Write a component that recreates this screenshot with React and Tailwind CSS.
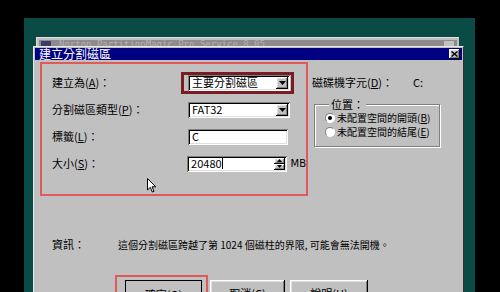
import React from "react";

const sunken =
  "shadow-[inset_1px_1px_0_#808080,inset_-1px_-1px_0_#ffffff,inset_2px_2px_0_#000000,inset_-2px_-2px_0_#dfdfdf]";
const raised =
  "shadow-[inset_-1px_-1px_0_#000000,inset_1px_1px_0_#ffffff,inset_-2px_-2px_0_#808080,inset_2px_2px_0_#dfdfdf]";

function DownBtn() {
  return (
    <div className={`w-[12px] h-[12px] bg-[#c0c0c0] ${raised} flex items-center justify-center`}>
      <svg width="7" height="4" viewBox="0 0 7 4">
        <path d="M0 0H7L3.5 4Z" fill="#000" />
      </svg>
    </div>
  );
}

function Combo({ text }) {
  return (
    <div className={`w-[102px] h-[16px] bg-white ${sunken} flex items-center pl-[4px] pr-[2px]`}>
      <span className="flex-1 text-[11px] leading-none">{text}</span>
      <DownBtn />
    </div>
  );
}

function Row({ label, children }) {
  return (
    <div className="h-[27px] flex items-center pl-[10px]">
      <div className="w-[136px] text-[11px] leading-none whitespace-nowrap">{label}</div>
      {children}
    </div>
  );
}

function U({ c }) {
  return <span className="underline">{c}</span>;
}

export default function App() {
  return (
    <div className="w-[500px] h-[292px] bg-black relative overflow-hidden font-['Noto_Sans_CJK_TC',sans-serif] text-black">
      <div className="absolute left-[24px] top-[18px] w-[451px] h-[274px] bg-[#0b4b46]" />
      {/* back window */}
      <div className="absolute left-[36px] top-[37px] w-[423px] h-[30px] bg-[#c0c0c0] border-t border-l border-[#e0e0e0] p-[2px]">
        <div className="h-[9px] bg-[#8c8c8c] flex items-center pl-[2px] pr-[3px] overflow-hidden">
          <div className="w-[10px] h-[7px] bg-[#3c3c6c] mr-[8px]" />
          <span className="flex-1 text-[9px] leading-none text-[#b0b0b0] font-['DejaVu_Sans_Mono',monospace] whitespace-nowrap">
            Norton PartitionMagic Pro Service 8.05
          </span>
          <div className="w-[10px] h-[7px] bg-[#c0c0c0]" />
        </div>
      </div>
      {/* front dialog */}
      <div className="absolute left-[33px] top-[46px] w-[431px] h-[260px] bg-[#c0c0c0] border border-t-[#e8e8e8] border-l-[#e8e8e8] border-r-[#303030] border-b-[#303030] p-[1px] flex flex-col">
        <div className="h-[14px] bg-[#000080] flex items-center pl-[4px] pr-[2px]">
          <span className="flex-1 text-white text-[12px] leading-none">建立分割磁區</span>
          <div className={`w-[11px] h-[10px] bg-[#c0c0c0] ${raised} flex items-center justify-center`}>
            <svg width="7" height="6" viewBox="0 0 7 6">
              <path d="M0.5 0.5L6.5 5.5M6.5 0.5L0.5 5.5" stroke="#000" strokeWidth="1.4" />
            </svg>
          </div>
        </div>

        <div className="flex mt-[2px] pl-[5px]">
          {/* left annotated box */}
          <div className="w-[268px] h-[134px] border-2 border-[#e05a5a] pt-[5px] flex flex-col">
            <Row label={<>建立為(<U c="A" />)：</>}>
              <div className="relative">
                <div className="absolute left-[-7px] right-[-4px] top-[-3px] bottom-[-3px] border-[3px] border-[#7a1c22]" />
                <Combo text="主要分割磁區" />
              </div>
            </Row>
            <Row label={<>分割磁區類型(<U c="P" />)：</>}>
              <Combo text="FAT32" />
            </Row>
            <Row label={<>標籤(<U c="L" />)：</>}>
              <div className={`w-[100px] h-[16px] bg-white ${sunken} flex items-center pl-[4px]`}>
                <span className="text-[11px] leading-none">C</span>
              </div>
            </Row>
            <Row label={<>大小(<U c="S" />)：</>}>
              <div className={`w-[100px] h-[16px] bg-white ${sunken} flex items-center pl-[4px] pr-[2px]`}>
                <span className="text-[11px] leading-none">20480</span>
                <span className="w-px h-[11px] bg-black" />
                <span className="flex-1" />
                <div className="w-[11px] h-[12px] flex flex-col">
                  <div className={`flex-1 bg-[#c0c0c0] ${raised} flex items-center justify-center`}>
                    <svg width="5" height="3" viewBox="0 0 5 3"><path d="M0 3H5L2.5 0Z" fill="#000" /></svg>
                  </div>
                  <div className={`flex-1 bg-[#c0c0c0] ${raised} flex items-center justify-center`}>
                    <svg width="5" height="3" viewBox="0 0 5 3"><path d="M0 0H5L2.5 3Z" fill="#000" /></svg>
                  </div>
                </div>
              </div>
              <span className="ml-[4px] text-[10px] leading-none font-['DejaVu_Sans',sans-serif]">MB</span>
            </Row>
            <div className="relative h-0">
              <svg className="absolute left-[105px] top-[1px]" width="10" height="15" viewBox="0 0 10 15">
                <path d="M0.5 0.5V12L3.3 9.3L5.3 14L7 13.3L5 8.8H8.8Z" fill="#fff" stroke="#000" strokeWidth="1" />
              </svg>
            </div>
          </div>

          {/* right column */}
          <div className="ml-[4px] flex flex-col">
            <div className="h-[31px] flex items-center pt-[9px]">
              <span className="w-[101px] text-[11px] leading-none whitespace-nowrap">磁碟機字元(<U c="D" />)：</span>
              <span className="text-[11px] leading-none">C:</span>
            </div>
            <div className="ml-[2px] mt-[11px] w-[126px] h-[43px] border border-[#808080] shadow-[1px_1px_0_#ffffff,inset_1px_1px_0_#ffffff] relative flex flex-col pl-[10px] pt-[8px] gap-[4px]">
              <span className="absolute left-[14px] top-[-6px] bg-[#c0c0c0] px-[2px] text-[11px] leading-none">位置：</span>
              <div className="flex items-center gap-[2px]">
                <div className="w-[10px] h-[10px] rounded-full bg-white border border-t-[#808080] border-l-[#808080] border-r-[#ffffff] border-b-[#ffffff] flex items-center justify-center">
                  <div className="w-[4px] h-[4px] rounded-full bg-black" />
                </div>
                <span className="text-[10px] leading-none whitespace-nowrap">未配置空間的開頭(<U c="B" />)</span>
              </div>
              <div className="flex items-center gap-[2px]">
                <div className="w-[10px] h-[10px] rounded-full bg-white border border-t-[#808080] border-l-[#808080] border-r-[#ffffff] border-b-[#ffffff]" />
                <span className="text-[10px] leading-none whitespace-nowrap">未配置空間的結尾(<U c="E" />)</span>
              </div>
            </div>
          </div>
        </div>

        <div className="flex items-center mt-[43px] h-[14px] pl-[17px]">
          <span className="w-[66px] text-[11px] leading-none">資訊：</span>
          <span className="text-[10px] leading-none whitespace-nowrap">這個分割磁區跨越了第 1024 個磁柱的界限, 可能會無法開機。</span>
        </div>

        <div className="flex items-start mt-[25px] pl-[80px]">
          <div className="border-2 border-[#e05a5a] pl-[8px] pr-[4px] pt-[3px]">
            <div className="w-[77px] h-[23px] border border-black bg-[#c0c0c0] flex justify-center pt-[8px]">
              <span className="text-[11px] leading-none">確定(<U c="O" />)</span>
            </div>
          </div>
          <div className={`ml-[2px] mt-[5px] w-[75px] h-[23px] bg-[#c0c0c0] ${raised} flex justify-center pt-[8px]`}>
            <span className="text-[11px] leading-none">取消(<U c="C" />)</span>
          </div>
          <div className={`ml-[5px] mt-[5px] w-[78px] h-[23px] bg-[#c0c0c0] ${raised} flex justify-center pt-[8px]`}>
            <span className="text-[11px] leading-none">說明(<U c="H" />)</span>
          </div>
        </div>
      </div>
    </div>
  );
}
